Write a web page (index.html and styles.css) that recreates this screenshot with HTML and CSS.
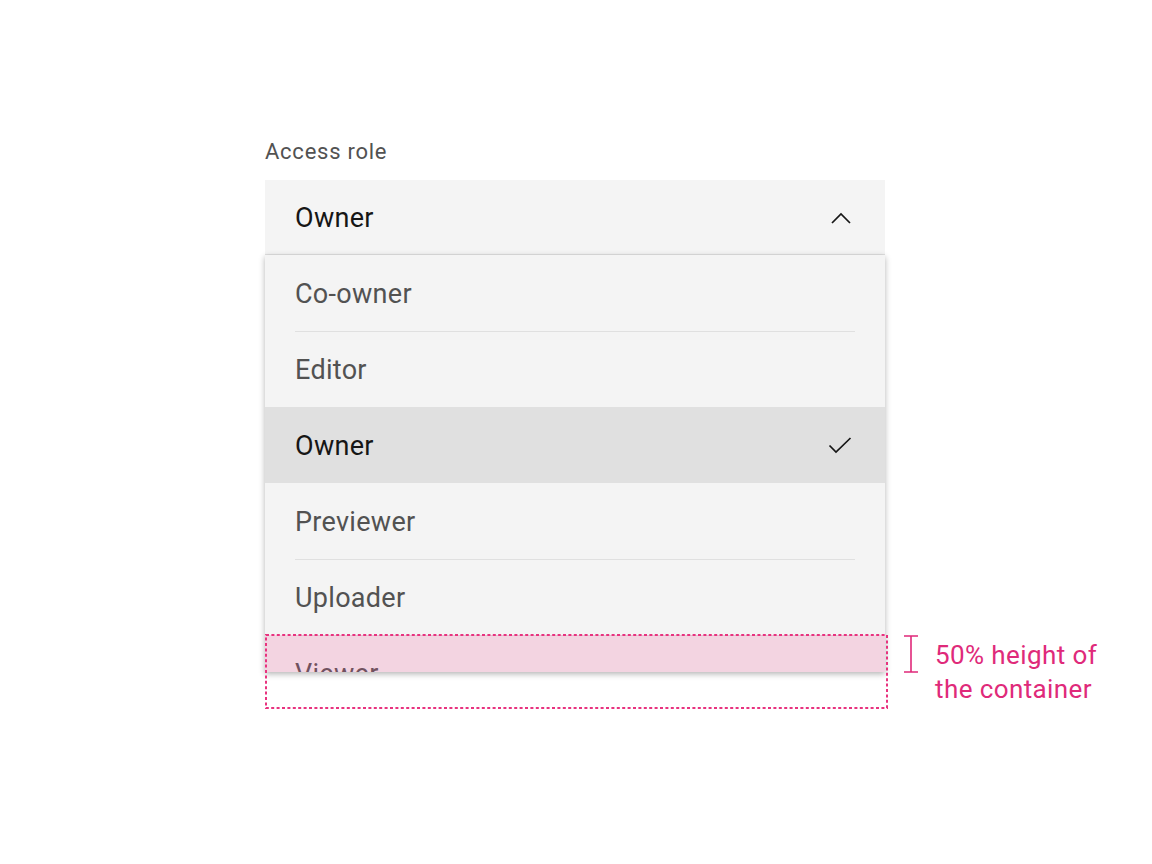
FILE: index.html
```html
<!DOCTYPE html>
<html lang="en">
<head>
<meta charset="utf-8">
<title>Access role dropdown</title>
<link rel="stylesheet" href="styles.css">
</head>
<body>
<div class="page">
  <div class="label">Access role</div>
  <div class="dropdown">
    <div class="field">
      <span class="field-text">Owner</span>
      <svg class="chevron" width="20" height="12" viewBox="0 0 20 12"><path d="M1 11 L10 2 L19 11" fill="none" stroke="#161616" stroke-width="1.7"/></svg>
    </div>
    <div class="menu">
      <div class="item first"><div class="item-inner">Co-owner</div></div>
      <div class="item"><div class="item-inner">Editor</div></div>
      <div class="item selected"><div class="item-inner">Owner<svg class="check" width="24" height="18" viewBox="0 0 24 18"><path d="M1.5 8.5 L8 15 L22.5 1" fill="none" stroke="#161616" stroke-width="1.7"/></svg></div></div>
      <div class="item after-selected"><div class="item-inner">Previewer</div></div>
      <div class="item"><div class="item-inner">Uploader</div></div>
      <div class="item viewer"><div class="item-inner">Viewer</div></div>
    </div>
    <svg class="measure" width="624" height="76" viewBox="0 0 624 76"><rect x="1" y="1" width="621" height="73" fill="none" stroke="#e8337f" stroke-width="2" stroke-dasharray="3 2.4"/></svg>
    <div class="annotation">
      <svg class="bracket" width="16" height="38" viewBox="0 0 16 38"><path d="M1 1 H15 M8 1 V37 M1 37 H15" fill="none" stroke="#e0287a" stroke-width="1.6"/></svg>
      <div class="note">50% height of<br>the container</div>
    </div>
  </div>
</div>
</body>
</html>
```
FILE: styles.css
```css
html, body {
  margin: 0;
  padding: 0;
  background: #ffffff;
  min-height: 864px;
}
body {
  font-family: "Roboto", "Liberation Sans", sans-serif;
}
.page {
  padding: 137px 0 0 265px;
  min-height: 727px;
}
.label {
  font-size: 22px;
  line-height: 30px;
  color: #525252;
  letter-spacing: 0.75px;
  margin-bottom: 13px;
}
.dropdown {
  position: relative;
  width: 620px;
}
.field {
  height: 74px;
  background: #f4f4f4;
  border-bottom: 1px solid #e0e0e0;
  display: flex;
  align-items: center;
  justify-content: space-between;
  padding: 2px 34px 0 30px;
  box-sizing: border-box;
  height: 75px;
  font-size: 27px;
  color: #161616;
  letter-spacing: 0.3px;
}
.chevron {
  display: block;
}
.menu {
  height: 417px;
  overflow: hidden;
  background: #f4f4f4;
  box-shadow: 0 2px 6px rgba(0, 0, 0, 0.3);
}
.item {
  position: relative;
  height: 76px;
  padding: 0 30px;
  font-size: 27px;
  color: #525252;
  letter-spacing: 0.3px;
}
.item-inner {
  height: 76px;
  box-sizing: border-box;
  border-top: 1px solid #e0e0e0;
  display: flex;
  align-items: center;
  justify-content: space-between;
}
.item.first .item-inner,
.item.selected .item-inner,
.item.after-selected .item-inner {
  border-top-color: transparent;
}
.item.selected {
  background: #e0e0e0;
  color: #161616;
}
.check {
  display: block;
  margin-right: 3px;
}
.item.viewer::after {
  content: "";
  position: absolute;
  left: 0;
  top: 0;
  right: 0;
  bottom: 0;
  background: rgba(238, 83, 150, 0.2);
}
.measure {
  position: absolute;
  left: 0;
  top: 454px;
  display: block;
}
.annotation {
  position: absolute;
  left: 638px;
  top: 455px;
  display: flex;
  align-items: flex-start;
  gap: 16px;
  white-space: nowrap;
}
.bracket {
  display: block;
}
.note {
  font-size: 26px;
  line-height: 34px;
  color: #df2a7a;
  margin-top: 3px;
  letter-spacing: 0.4px;
}
```
